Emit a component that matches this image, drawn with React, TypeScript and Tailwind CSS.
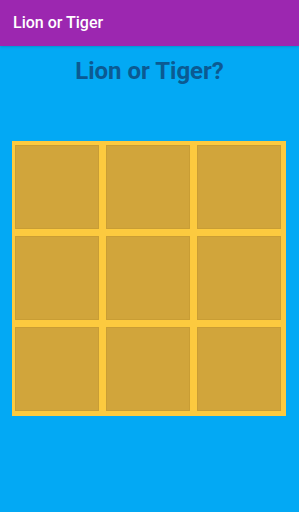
export default function App() {
  const cells = Array.from({ length: 9 });
  return (
    <div className="w-[299px] h-[512px] bg-[#03a9f4] flex flex-col" style={{ fontFamily: "Roboto, 'Liberation Sans', sans-serif" }}>
      <div className="h-[46px] bg-[#9c27b0] flex items-center pl-[13px] text-white text-[16px] font-medium shadow-sm">
        Lion or Tiger
      </div>
      <div className="text-center text-[#0b5a92] font-bold text-[24px] mt-[10px] leading-[30px]">
        Lion or Tiger?
      </div>
      <div className="mt-[55px] mx-[12px] w-[274px] h-[275px] bg-[#fcca3f] pl-[3px] pt-[4px] pr-[5px] pb-[5px] grid grid-cols-3 grid-rows-3 gap-x-[7px] gap-y-[7px]">
        {cells.map((_, i) => (
          <div key={i} className="bg-[#d1a53b] border border-[#c99d34]" />
        ))}
      </div>
    </div>
  );
}
